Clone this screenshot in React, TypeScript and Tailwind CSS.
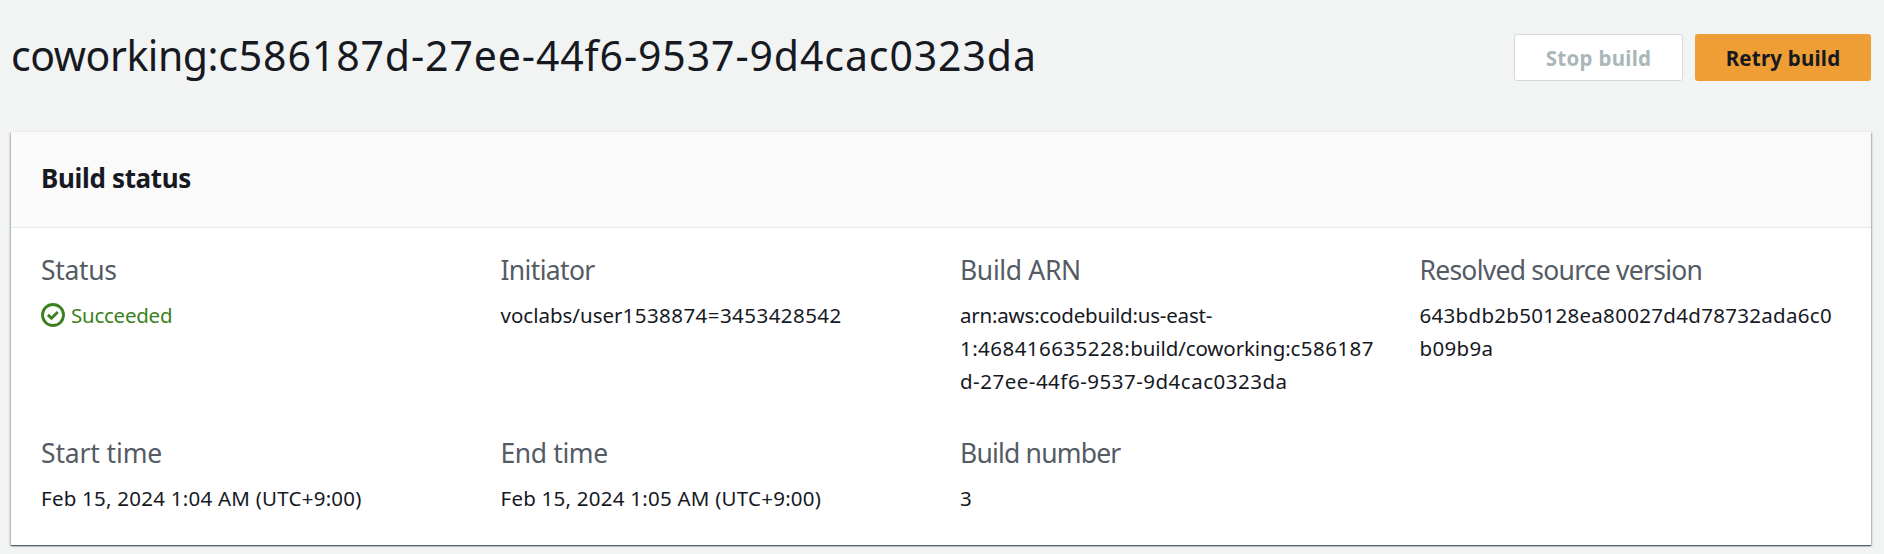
import type { ReactNode } from "react";

function Field({ label, tracking, children }: { label: string; tracking: string; children: ReactNode }) {
  return (
    <div className="w-[459.5px] shrink-0 whitespace-nowrap">
      <div className={`text-[26.5px] leading-[33px] text-[#545b64] ${tracking}`}>{label}</div>
      <div className="mt-3 text-[20.5px] leading-[33px]">{children}</div>
    </div>
  );
}

function SuccessIcon() {
  return (
    <svg viewBox="0 0 16 16" className="mb-0.5 size-6 shrink-0" fill="none" stroke="currentColor" strokeWidth="2">
      <circle cx="8" cy="8" r="7" strokeWidth="1.9" />
      <path d="M4.6 7.9L7 10.2l4.2-4.2" strokeWidth="1.9" />
    </svg>
  );
}

export default function App() {
  return (
    <div className="h-[554px] overflow-hidden bg-[#f2f3f3] pl-[11px] pr-[13px] font-['Noto_Sans',sans-serif] text-[#16191f]">
      <header className="flex h-[132px] items-start justify-between">
        <h1 className="pt-[25px] text-[41px] leading-[60px] whitespace-nowrap">
          <span className="tracking-[-0.45px]">coworking:</span>
          <span className="tracking-[0.897px]">c586187d-27ee-44f6-9537-9d4cac0323da</span>
        </h1>
        <div className="flex gap-3 pt-[34px] text-[20.5px] font-bold">
          <button
            disabled
            className="h-[47px] w-[169px] rounded-[3px] border border-[#d5dbdb] bg-white pt-px tracking-[0.288px] text-[#aab7b8]"
          >
            Stop build
          </button>
          <button className="h-[47px] w-[176px] rounded-[3px] bg-[#ef9d35] pt-px tracking-[0.22px]">Retry build</button>
        </div>
      </header>

      <section className="h-[413px] bg-white shadow-[0_-1px_0_0_#eaeded,0_1px_1px_0_rgba(0,28,36,0.5),1px_1px_2px_0_rgba(0,28,36,0.25),-1px_1px_2px_0_rgba(0,28,36,0.25)]">
        <div className="h-24 border-b border-[#e6e9e9] bg-[#fafafa] pt-7 pl-[30px]">
          <h2 className="text-[26px] leading-9 font-bold tracking-[-0.33px]">Build status</h2>
        </div>
        <div className="flex flex-col gap-[39px] pt-[26px] pl-[30px]">
          <div className="flex">
            <Field label="Status" tracking="tracking-[-0.325px]">
              <span className="flex items-center gap-1.5 tracking-[-0.25px] text-[#3d8020]">
                <SuccessIcon />
                Succeeded
              </span>
            </Field>
            <Field label="Initiator" tracking="tracking-[-0.65px]">
              voclabs/user<span className="tracking-[0.45px]">1538874=3453428542</span>
            </Field>
            <Field label="Build ARN" tracking="tracking-[-0.36px]">
              <span className="block tracking-[-0.204px]">arn:aws:codebuild:us-east-</span>
              <span className="block tracking-[0.45px]">
                1:468416635228:<span className="tracking-[-0.097px]">build/coworking:</span>c586187
              </span>
              <span className="block tracking-[0.501px]">d-27ee-44f6-9537-9d4cac0323da</span>
            </Field>
            <Field label="Resolved source version" tracking="tracking-[-0.753px]">
              <span className="block tracking-[0.306px]">643bdb2b50128ea80027d4d78732ada6c0</span>
              <span className="block tracking-[0.321px]">b09b9a</span>
            </Field>
          </div>
          <div className="flex">
            <Field label="Start time" tracking="tracking-[-0.14px]">
              <span className="tracking-[0.238px]">Feb 15, 2024 1:04 AM (UTC+9:00)</span>
            </Field>
            <Field label="End time" tracking="tracking-[-0.397px]">
              <span className="tracking-[0.238px]">Feb 15, 2024 1:05 AM (UTC+9:00)</span>
            </Field>
            <Field label="Build number" tracking="tracking-[-0.813px]">
              3
            </Field>
          </div>
        </div>
      </section>
    </div>
  );
}
